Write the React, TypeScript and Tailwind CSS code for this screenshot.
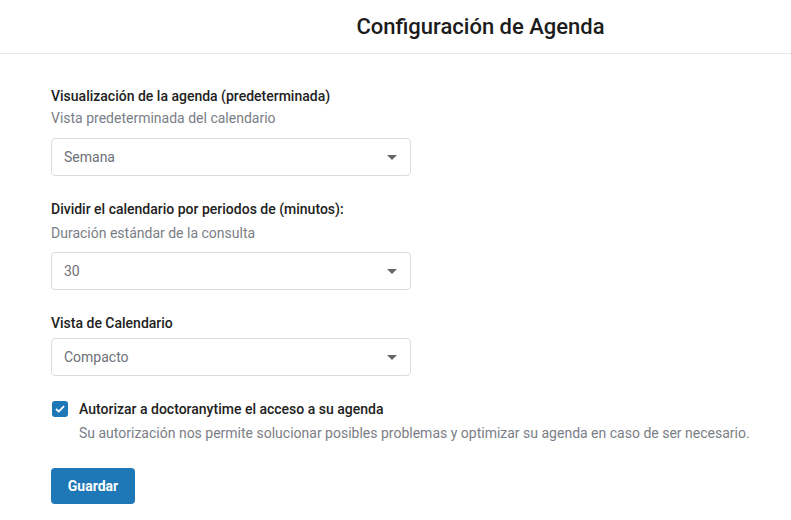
import React from "react";

function Select({ value }: { value: string }) {
  return (
    <div className="flex h-[38px] w-[360px] items-center justify-between rounded border border-[#dcdcdc] bg-white pl-3 pr-3">
      <span className="text-[14px] text-[#6c7079]">{value}</span>
      <svg width="10" height="5" viewBox="0 0 10 5" className="mr-[1px]">
        <path d="M0 0 L10 0 L5 5 Z" fill="#666" />
      </svg>
    </div>
  );
}

export default function App() {
  return (
    <div className="min-h-[520px] w-full bg-white" style={{ fontFamily: "Roboto, 'Liberation Sans', sans-serif" }}>
      <div className="flex h-[54px] items-center justify-center border-b border-[#e8e8e8] pl-[170px]">
        <h1 className="text-[22px] font-medium text-[#1c1c1c]">Configuración de Agenda</h1>
      </div>
      <div className="pl-[51px] pt-[32px]">
        <div className="text-[14px] font-medium leading-5 text-[#222]">Visualización de la agenda (predeterminada)</div>
        <div className="mt-[2px] text-[14px] leading-5 text-[#7a7e86]">Vista predeterminada del calendario</div>
        <div className="mt-[10px]">
          <Select value="Semana" />
        </div>

        <div className="mt-[23px] text-[14px] font-medium leading-5 text-[#222]">Dividir el calendario por periodos de (minutos):</div>
        <div className="mt-[4px] text-[14px] leading-5 text-[#7a7e86]">Duración estándar de la consulta</div>
        <div className="mt-[9px]">
          <Select value="30" />
        </div>

        <div className="mt-[23px] text-[14px] font-medium leading-5 text-[#222]">Vista de Calendario</div>
        <div className="mt-[5px]">
          <Select value="Compacto" />
        </div>

        <div className="mt-[23px] flex items-center">
          <div className="ml-[1px] flex h-4 w-4 items-center justify-center rounded-[3px] bg-[#1e77b6]">
            <svg width="10" height="8" viewBox="0 0 10 8">
              <path d="M1 4 L3.8 6.6 L9 1.2" fill="none" stroke="white" strokeWidth="1.8" />
            </svg>
          </div>
          <span className="ml-[11px] text-[14px] font-medium leading-5 text-[#222]">Autorizar a doctoranytime el acceso a su agenda</span>
        </div>
        <div className="ml-[28px] mt-[4px] text-[14px] leading-5 text-[#7a7e86]">
          Su autorización nos permite solucionar posibles problemas y optimizar su agenda en caso de ser necesario.
        </div>

        <button className="mt-[25px] flex h-[36px] w-[84px] items-center justify-center rounded bg-[#1e77b6] text-[14px] font-bold text-white">
          Guardar
        </button>
      </div>
    </div>
  );
}
